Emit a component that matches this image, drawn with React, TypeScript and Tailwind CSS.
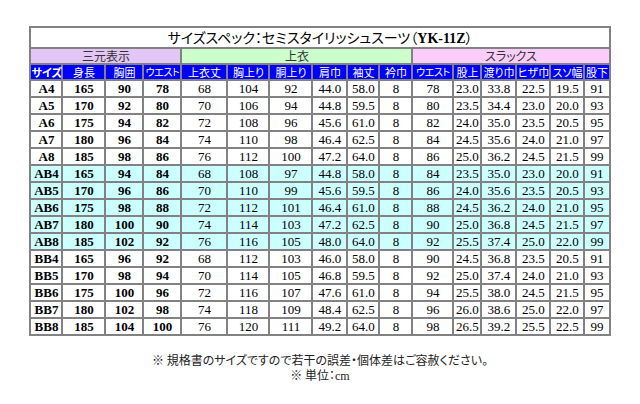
import React from "react";

const widths = [32, 43, 38, 38, 46, 42, 43, 35, 32, 33, 41, 28, 35, 34, 34, 25];

const headers = [
  "サイズ",
  "身長",
  "胸囲",
  "ウエスト",
  "上衣丈",
  "胸上り",
  "胴上り",
  "肩巾",
  "袖丈",
  "衿巾",
  "ウエスト",
  "股上",
  "渡り巾",
  "ヒザ巾",
  "スソ幅",
  "股下",
];

const rows: string[][] = [
  ["A4", "165", "90", "78", "68", "104", "92", "44.0", "58.0", "8", "78", "23.0", "33.8", "22.5", "19.5", "91"],
  ["A5", "170", "92", "80", "70", "106", "94", "44.8", "59.5", "8", "80", "23.5", "34.4", "23.0", "20.0", "93"],
  ["A6", "175", "94", "82", "72", "108", "96", "45.6", "61.0", "8", "82", "24.0", "35.0", "23.5", "20.5", "95"],
  ["A7", "180", "96", "84", "74", "110", "98", "46.4", "62.5", "8", "84", "24.5", "35.6", "24.0", "21.0", "97"],
  ["A8", "185", "98", "86", "76", "112", "100", "47.2", "64.0", "8", "86", "25.0", "36.2", "24.5", "21.5", "99"],
  ["AB4", "165", "94", "84", "68", "108", "97", "44.8", "58.0", "8", "84", "23.5", "35.0", "23.0", "20.0", "91"],
  ["AB5", "170", "96", "86", "70", "110", "99", "45.6", "59.5", "8", "86", "24.0", "35.6", "23.5", "20.5", "93"],
  ["AB6", "175", "98", "88", "72", "112", "101", "46.4", "61.0", "8", "88", "24.5", "36.2", "24.0", "21.0", "95"],
  ["AB7", "180", "100", "90", "74", "114", "103", "47.2", "62.5", "8", "90", "25.0", "36.8", "24.5", "21.5", "97"],
  ["AB8", "185", "102", "92", "76", "116", "105", "48.0", "64.0", "8", "92", "25.5", "37.4", "25.0", "22.0", "99"],
  ["BB4", "165", "96", "92", "68", "112", "103", "46.0", "58.0", "8", "90", "24.5", "36.8", "23.5", "20.5", "91"],
  ["BB5", "170", "98", "94", "70", "114", "105", "46.8", "59.5", "8", "92", "25.0", "37.4", "24.0", "21.0", "93"],
  ["BB6", "175", "100", "96", "72", "116", "107", "47.6", "61.0", "8", "94", "25.5", "38.0", "24.5", "21.5", "95"],
  ["BB7", "180", "102", "98", "74", "118", "109", "48.4", "62.5", "8", "96", "26.0", "38.6", "25.0", "22.0", "97"],
  ["BB8", "185", "104", "100", "76", "120", "111", "49.2", "64.0", "8", "98", "26.5", "39.2", "25.5", "22.5", "99"],
];

const cell = "border border-[#828282] p-0 text-center align-middle";
const gothic = "font-['Noto_Sans_CJK_JP',sans-serif] [font-feature-settings:'palt']";
const serif = "font-['Liberation_Serif',serif]";

export default function App() {
  return (
    <div className="w-[640px] h-[404px] bg-white flex flex-col items-center pt-[26px]">
      <table className="border-separate border-spacing-0 border border-[#828282] table-fixed w-[581px]">
        <colgroup>
          {widths.map((w, i) => (
            <col key={i} style={{ width: w }} />
          ))}
        </colgroup>
        <tbody>
          <tr>
            <td colSpan={16} className={`${cell} h-[21px] bg-white text-black leading-none`}>
              <span className={`${gothic} text-[14px]`}>サイズスペック：セミスタイリッシュスーツ（</span>
              <span className={`${serif} font-bold text-[14px]`}>YK-11Z</span>
              <span className={`${gothic} text-[14px]`}>）</span>
            </td>
          </tr>
          <tr>
            <td colSpan={4} className={`${cell} ${gothic} h-[16px] bg-[#e3c6f5] text-[#333] text-[12px] leading-none`}>
              三元表示
            </td>
            <td colSpan={6} className={`${cell} ${gothic} h-[16px] bg-[#ccffcc] text-[#333] text-[12px] leading-none`}>
              上衣
            </td>
            <td colSpan={6} className={`${cell} ${gothic} h-[16px] bg-[#fbcdfb] text-[#333] text-[12px] leading-none`}>
              スラックス
            </td>
          </tr>
          <tr>
            {headers.map((h, i) => (
              <td
                key={i}
                className={`${cell} ${gothic} h-[16px] bg-[#0000ff] text-white leading-none whitespace-nowrap ${
                  h === "ウエスト" ? "text-[10px] tracking-[-0.4px]" : "text-[11px]"
                } ${i === 0 ? "font-bold" : ""}`}
              >
                {h}
              </td>
            ))}
          </tr>
          {rows.map((r, ri) => (
            <tr key={ri} className={ri >= 5 && ri < 10 ? "bg-[#ccffff]" : "bg-white"}>
              {r.map((v, ci) => (
                <td
                  key={ci}
                  className={`${cell} ${serif} h-[17px] text-[13px] leading-none text-black whitespace-nowrap ${ci < 4 ? "font-bold" : ""}`}
                >
                  {v}
                </td>
              ))}
            </tr>
          ))}
        </tbody>
      </table>
      <div className={`mt-[16px] text-[12px] leading-[15px] text-[#222] text-center ${gothic}`}>
        <div>※ 規格書のサイズですので若干の誤差・個体差はご容赦ください。</div>
        <div>
          ※ 単位：<span className={serif}>cm</span>
        </div>
      </div>
    </div>
  );
}
